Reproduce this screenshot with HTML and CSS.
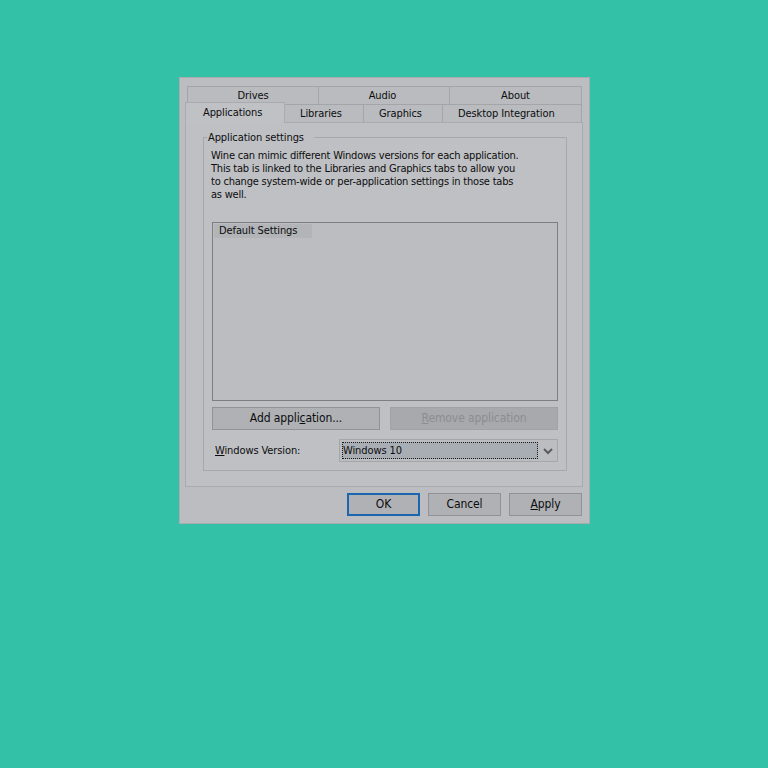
FILE: index.html
```html
<!DOCTYPE html>
<html>
<head>
<meta charset="utf-8">
<link rel="stylesheet" href="styles.css">
</head>
<body>
<div class="dialog">
  <div class="tabs">
    <div class="tabrow row1">
      <div class="tab w-drives">Drives</div>
      <div class="tab w-audio">Audio</div>
      <div class="tab w-about last">About</div>
    </div>
    <div class="tabrow row2">
      <div class="tab left sel w-apps">Applications</div>
      <div class="tab left w-libs">Libraries</div>
      <div class="tab left w-gfx">Graphics</div>
      <div class="tab left w-desk last">Desktop Integration</div>
    </div>
  </div>
  <div class="panel">
    <fieldset class="group">
      <legend class="legend">Application settings</legend>
      <p class="desc">Wine can mimic different Windows versions for each application.<br>This tab is linked to the Libraries and Graphics tabs to allow you<br>to change system-wide or per-application settings in those tabs<br>as well.</p>
      <div class="listbox"><div class="item">Default Settings</div></div>
      <div class="btnrow">
        <div class="btn wide">Add appli<u>c</u>ation...</div>
        <div class="btn wide disabled"><u>R</u>emove application</div>
      </div>
      <div class="verrow">
        <div class="label"><u>W</u>indows Version:</div>
        <div class="combo">
          <div class="combo-val">Windows 10</div>
          <svg class="chev" width="10" height="8" viewBox="0 0 10 8"><path d="M1 2 L5 6 L9 2" fill="none" stroke="#5a5c5f" stroke-width="2"/></svg>
        </div>
      </div>
    </fieldset>
  </div>
  <div class="footer">
    <div class="btn foot ok">OK</div>
    <div class="btn foot">Cancel</div>
    <div class="btn foot"><u>A</u>pply</div>
  </div>
</div>
</body>
</html>
```
FILE: styles.css
```css
html, body {
  margin: 0;
  padding: 0;
  background: #33c2a8;
  width: 768px;
  height: 768px;
  overflow: hidden;
}
body {
  font-family: "DejaVu Sans Condensed", "DejaVu Sans", sans-serif;
  font-size: 11px;
  letter-spacing: -0.1px;
  color: #0c0d0e;
  white-space: nowrap;
}
.dialog {
  box-sizing: border-box;
  width: 411px;
  margin: 77px 0 0 179px;
  background: #bcbdc0;
  border: 1px solid #a9abae;
  padding: 8px 6px 7px 5px;
}
.tabrow {
  display: flex;
  height: 18px;
}
.row1 {
  margin-left: 2px;
}
.tab {
  box-sizing: border-box;
  height: 18px;
  border-top: 1px solid #a3a5a8;
  border-left: 1px solid #a3a5a8;
  background: #b9bbbe;
  text-align: center;
  line-height: 17px;
}
.tab.left {
  text-align: left;
  padding-left: 15px;
}
.tab.last {
  border-right: 1px solid #a3a5a8;
}
.w-drives { width: 131px; }
.w-audio { width: 131px; padding-right: 3px; }
.w-about { width: 133px; }
.w-apps { width: 100px; }
.w-libs { width: 78px; }
.w-gfx { width: 79px; }
.w-desk { width: 140px; }
.tab.sel {
  height: 21px;
  margin-top: -2px;
  margin-bottom: -1px;
  position: relative;
  z-index: 1;
  background: #c0c1c4;
  border-top-color: #a9abae;
  border-left-color: #a9abae;
  border-right: 1px solid #a9abae;
  line-height: 19px;
  padding-left: 17px;
}
.tab.sel + .tab {
  border-left: none;
}
.panel {
  box-sizing: border-box;
  width: 398px;
  height: 365px;
  background: #bfc0c3;
  border: 1px solid #a9abae;
  padding: 8px 0 0 17px;
}
.group {
  box-sizing: border-box;
  width: 364px;
  height: 340px;
  margin: 0;
  padding: 0 8px 8px 8px;
  border: 1px solid #a6a8ab;
}
.legend {
  padding: 0 10px 0 1px;
  margin-left: -5px;
  line-height: 13px;
}
.desc {
  margin: 5px 0 0 -1px;
  line-height: 13px;
  letter-spacing: -0.21px;
}
.listbox {
  box-sizing: border-box;
  margin-top: 21px;
  height: 179px;
  border: 1px solid #7c7e81;
  background: #bcbdc0;
  padding: 1px;
}
.item {
  display: inline-block;
  background: #b2b4b7;
  padding: 0 15px 0 5px;
  line-height: 14px;
}
.btnrow {
  display: flex;
  gap: 10px;
  margin-top: 6px;
}
.btn {
  box-sizing: border-box;
  height: 23px;
  border: 1px solid #909295;
  background: #afb1b4;
  text-align: center;
  line-height: 21px;
  font-size: 12px;
}
.btn.wide {
  width: 168px;
}
.btn.disabled {
  background: #a7a9ac;
  border-color: #a0a2a5;
  color: #8b8d90;
}
.verrow {
  display: flex;
  align-items: center;
  margin-top: 9px;
}
.label {
  flex: 1;
  padding-left: 3px;
}
.combo {
  box-sizing: border-box;
  width: 219px;
  height: 23px;
  border: 1px solid #a5a7aa;
  background: #bcbdc0;
  display: flex;
  align-items: center;
  padding: 1px;
}
.combo-val {
  box-sizing: border-box;
  width: 196px;
  height: 17px;
  margin-left: 1px;
  background: #a9adb4;
  border: 1px dotted #1a1a1a;
  line-height: 15px;
  padding-left: 0;
}
.chev {
  margin-left: 5px;
}
.footer {
  display: flex;
  justify-content: flex-end;
  gap: 8px;
  margin-top: 6px;
  padding-right: 1px;
}
.btn.foot {
  width: 73px;
}
.btn.ok {
  border: 2px solid #1c66b0;
  line-height: 19px;
}
```
